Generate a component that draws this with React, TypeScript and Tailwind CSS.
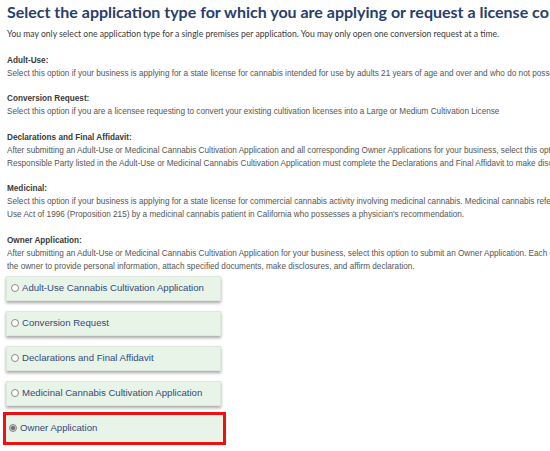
const sections = [
  {
    title: "Adult-Use:",
    lines: [
      "Select this option if your business is applying for a state license for cannabis intended for use by adults 21 years of age and over and who do not possess a physician's recommendation.",
    ],
  },
  {
    title: "Conversion Request:",
    lines: [
      "Select this option if you are a licensee requesting to convert your existing cultivation licenses into a Large or Medium Cultivation License",
    ],
  },
  {
    title: "Declarations and Final Affidavit:",
    lines: [
      "After submitting an Adult-Use or Medicinal Cannabis Cultivation Application and all corresponding Owner Applications for your business, select this option to submit the Declarations. The",
      "Responsible Party listed in the Adult-Use or Medicinal Cannabis Cultivation Application must complete the Declarations and Final Affidavit to make disclosures.",
    ],
  },
  {
    title: "Medicinal:",
    lines: [
      "Select this option if your business is applying for a state license for commercial cannabis activity involving medicinal cannabis. Medicinal cannabis refers to cannabis used under the Compassionate",
      "Use Act of 1996 (Proposition 215) by a medicinal cannabis patient in California who possesses a physician's recommendation.",
    ],
  },
  {
    title: "Owner Application:",
    lines: [
      "After submitting an Adult-Use or Medicinal Cannabis Cultivation Application for your business, select this option to submit an Owner Application.  Each owner must submit an application that requires",
      "the owner to provide personal information, attach specified documents, make disclosures, and affirm declaration.",
    ],
  },
];

const options = [
  "Adult-Use Cannabis Cultivation Application",
  "Conversion Request",
  "Declarations and Final Affidavit",
  "Medicinal Cannabis Cultivation Application",
  "Owner Application",
];

function Radio({ selected }: { selected: boolean }) {
  return (
    <span
      className={
        "flex items-center justify-center w-[8px] h-[8px] rounded-full border border-[#8a8a8a] " +
        (selected ? "bg-[#c8c8c8]" : "bg-white")
      }
    >
      {selected && <span className="w-[4px] h-[4px] rounded-full bg-[#6b6b6b]" />}
    </span>
  );
}

function Option({ label }: { label: string }) {
  return (
    <div className="flex items-center h-[25px] w-[215px] bg-[#e9f4e8] border border-[#dfe8de] shadow-[0_2px_3px_rgba(0,0,0,0.35)] pl-[4px]">
      <Radio selected={false} />
      <span className="ml-[3px] text-[9.6px] text-[#34497a]">{label}</span>
    </div>
  );
}

export default function App() {
  return (
    <div
      className="w-[550px] h-[451px] overflow-hidden bg-white"
      style={{ fontFamily: '"Liberation Sans", Arial, sans-serif' }}
    >
      <h1
        className="pl-[7px] pt-[1px] text-[16px] leading-[22px] font-bold text-[#27406b] whitespace-nowrap"
        style={{ fontFamily: "Lato, sans-serif" }}
      >
        Select the application type for which you are applying or request a license co
      </h1>

      <div className="pl-[7px] text-[8.2px] leading-[13px] text-[#444] whitespace-nowrap">
        <p
          className="mt-[5px] text-[8.6px] text-[#3a3a3a]"
          style={{ fontFamily: "Lato, sans-serif" }}
        >
          You may only select one application type for a single premises per application. You may only open one conversion request at a time.
        </p>

        {sections.map((s) => (
          <div key={s.title} className="mt-[12.5px]">
            <p className="font-bold text-[#3a3a3a]">{s.title}</p>
            {s.lines.map((l, i) => (
              <p key={i} className="text-[#555] overflow-hidden">
                {l}
              </p>
            ))}
          </div>
        ))}
      </div>

      <div className="flex flex-col pl-[6px] mt-[3px] gap-[10px]">
        {options.slice(0, 4).map((o) => (
          <Option key={o} label={o} />
        ))}
        <div className="-ml-[3px] -mt-[4px] w-[223px] border-[3px] border-[#ee1111] bg-[#e9f4e8]">
          <div className="flex items-center h-[27px] pl-[3px]">
            <Radio selected={true} />
            <span className="ml-[3px] text-[9.6px] text-[#34497a]">{options[4]}</span>
          </div>
        </div>
      </div>
    </div>
  );
}
